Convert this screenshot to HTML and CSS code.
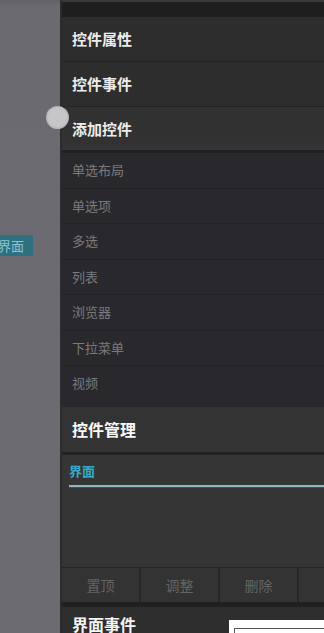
FILE: index.html
```html
<!DOCTYPE html>
<html lang="zh-CN">
<head>
    <meta charset="UTF-8">
    <meta name="viewport" content="width=device-width, initial-scale=1.0">
    <title>控件编辑</title>
    <link rel="stylesheet" href="styles.css">
</head>
<body>
    <div class="screen">
        <aside class="canvas">
            <span class="tag">界面</span>
        </aside>

        <main class="panel">
            <div class="topbar"></div>
            <div class="section">控件属性</div>
            <div class="section">控件事件</div>
            <div class="section open">添加控件</div>

            <ul class="widgets">
                <li>单选布局</li>
                <li>单选项</li>
                <li>多选</li>
                <li>列表</li>
                <li>浏览器</li>
                <li>下拉菜单</li>
                <li>视频</li>
            </ul>

            <div class="section manage">控件管理</div>
            <div class="tree">
                <div class="node">界面</div>
            </div>

            <div class="actions">
                <button class="btn">置顶</button>
                <button class="btn">调整</button>
                <button class="btn">删除</button>
                <button class="btn">置底</button>
            </div>

            <div class="section events">界面事件</div>
        </main>

        <!-- drag handle and popup peeking in from the bottom -->
        <div class="knob"></div>
        <div class="dialog"><div class="dialog-inner"></div></div>
    </div>
</body>
</html>
```

FILE: styles.css
```css
body {
    margin: 0;
    background: #2c2c2c;
    font-family: "Noto Sans CJK SC", "Noto Sans", sans-serif;
    overflow: hidden;
}
.screen {
    position: relative;
    display: flex;
    width: 324px;
    height: 633px;
    overflow: hidden;
}
.canvas {
    flex: 0 0 60px;
    background: linear-gradient(#626167, #6b6a70 6px, #6c6b71);
    border-right: 2px solid #2b2b2d;
}
.tag {
    display: block;
    margin-top: 235px;
    width: 33px;
    height: 21px;
    line-height: 21px;
    background: #2e6f80;
    color: #8cc4d2;
    font-size: 13px;
    text-indent: -2px;
}
.panel {
    flex: 1;
    display: flex;
    flex-direction: column;
    min-width: 0;
    background: #2c2c2c;
}
.topbar {
    height: 15px;
    border-top: 2px solid #3a3a3a;
    background: #1e1e1e;
}
.section {
    height: 44px;
    line-height: 44px;
    padding-left: 10px;
    color: #ececec;
    font-size: 15px;
    font-weight: bold;
    background: #2d2d2d;
    border-bottom: 1px solid #242424;
}
.section.open {
    height: 43px;
    background: linear-gradient(#313131, #323232 85%, #35353d);
    border-bottom: 3px solid #202020;
}
.widgets {
    list-style: none;
    margin: 0;
    padding: 0 0 6px;
    background: #29292d;
}
.widgets li {
    height: 34.5px;
    line-height: 34.5px;
    padding-left: 10px;
    color: #7a7a7e;
    font-size: 13px;
    border-bottom: 1px solid #232326;
}
.widgets li:last-child {
    border-bottom: none;
}
.section.manage {
    height: 45px;
    line-height: 45px;
    font-size: 16px;
    color: #fafafa;
    background: #333333;
    border-bottom: 3px solid #222222;
}
.tree {
    height: 112px;
    padding: 6px 0 0 7px;
    box-sizing: border-box;
    background: #353535;
}
.node {
    height: 24px;
    line-height: 20px;
    color: #36aacb;
    font-size: 13px;
    font-weight: bold;
    border-bottom: 2px solid #8eb8c4;
    box-shadow: 0 1px 0 #2d5866;
}
.actions {
    display: flex;
    height: 34px;
    background: #323232;
    border-top: 1px solid #262626;
    border-bottom: 5px solid #202020;
}
.btn {
    flex: 0 0 79px;
    height: 34px;
    padding: 0;
    border: none;
    border-right: 2px solid #272727;
    background: #333333;
    color: #646464;
    font-family: inherit;
    font-size: 14px;
}
.section.events {
    height: 26px;
    line-height: 34px;
    font-size: 16px;
    color: #f4f4f4;
    background: #2e2e2e;
    border-bottom: none;
    overflow: hidden;
}
.knob {
    position: absolute;
    left: 46px;
    top: 106px;
    width: 23px;
    height: 23px;
    border-radius: 50%;
    background: radial-gradient(circle, #c6c6c8 55%, #a8a8ac 80%, rgba(150, 150, 155, 0.6));
}
.dialog {
    position: absolute;
    left: 229px;
    top: 620px;
    width: 95px;
    height: 13px;
    background: #ffffff;
}
.dialog-inner {
    margin: 8px 0 0 5px;
    height: 5px;
    border-top: 1px solid #555555;
    border-left: 1px solid #555555;
    background: #ffffff;
}
```
